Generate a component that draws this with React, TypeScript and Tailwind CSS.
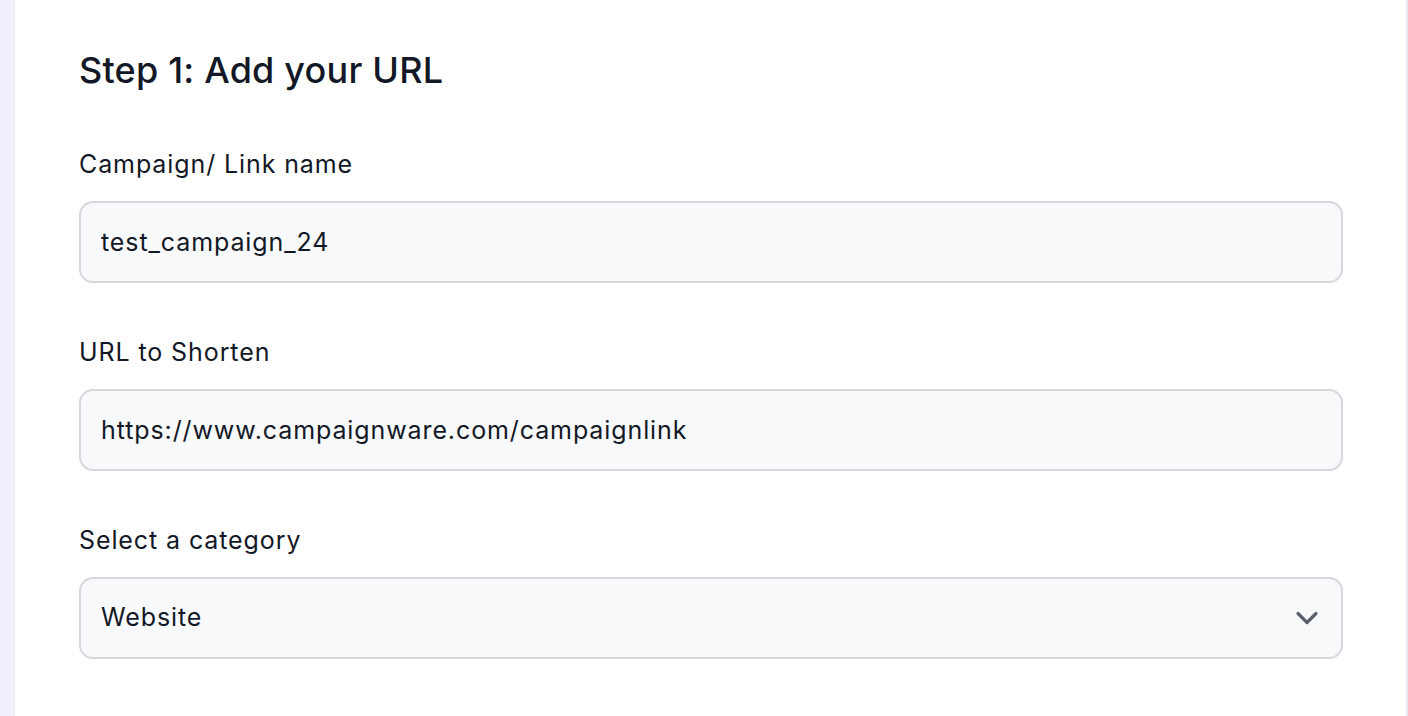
import React from "react";

const fields = [
  { label: "Campaign/ Link name", value: "test_campaign_24" },
  { label: "URL to Shorten", value: "https://www.campaignware.com/campaignlink" },
];

const ChevronDown = () => (
  <svg width="24" height="14" viewBox="0 0 24 14" fill="none">
    <path
      d="M3 2.5l9 9 9-9"
      stroke="#5b606d"
      strokeWidth="3.2"
      strokeLinecap="round"
      strokeLinejoin="round"
    />
  </svg>
);

export default function App() {
  return (
    <div
      className="flex h-[716px] w-full bg-[#f1effc] text-[#131826]"
      style={{ fontFamily: "Inter, 'Noto Sans', sans-serif" }}
    >
      <div className="w-[15px] shrink-0 border-r border-[#ebe8f8]" />
      <div className="flex-1 bg-white border-r-2 border-[#e7e5ee] pl-[64px] pr-[63px] pt-[46px]">
        <h1 className="text-[36px] leading-[48px] font-medium tracking-[0.2px]">Step 1: Add your URL</h1>

        <div className="mt-[54px] flex flex-col gap-[53px]">
          {fields.map((f) => (
            <div key={f.label} className="flex flex-col gap-[21px]">
              <label className="text-[25px] leading-[32px] tracking-[0.9px]">{f.label}</label>
              <input
                readOnly
                value={f.value}
                className="h-[82px] w-full rounded-[14px] border-2 border-[#d6d8dd] bg-[#f8f9fb] px-[20px] text-[25px] tracking-[0.9px] text-[#131826] outline-none"
              />
            </div>
          ))}

          <div className="flex flex-col gap-[21px]">
            <label className="text-[25px] leading-[32px] tracking-[0.9px]">Select a category</label>
            <div className="flex h-[82px] w-full items-center justify-between rounded-[14px] border-2 border-[#d6d8dd] bg-[#f8f9fb] pl-[20px] pr-[22px] text-[25px] tracking-[0.9px]">
              <span>Website</span>
              <ChevronDown />
            </div>
          </div>
        </div>
      </div>
    </div>
  );
}
